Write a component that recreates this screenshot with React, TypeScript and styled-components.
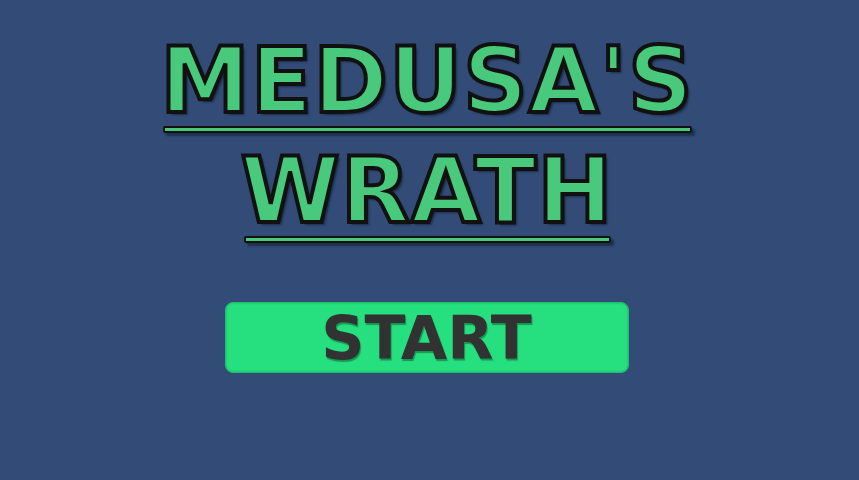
import React from "react";
import styled, { createGlobalStyle } from "styled-components";

const GlobalStyle = createGlobalStyle`
  html, body {
    margin: 0;
    padding: 0;
    background-color: #324c77;
  }
`;

const Screen = styled.div`
  width: 100vw;
  height: 100vh;
  overflow: hidden;
  background-color: #324c77;
  display: flex;
  flex-direction: column;
  align-items: center;
  padding: 36px 6px 0 0;
  box-sizing: border-box;
  font-family: "DejaVu Sans", Verdana, sans-serif;
`;

const Title = styled.h1`
  margin: 0;
  display: flex;
  flex-direction: column;
  align-items: center;
  gap: 13px;
  font-weight: 700;
`;

const TitleLine = styled.div`
  display: inline-flex;
  flex-direction: column;
  align-items: stretch;
`;

// the dark stroke sits on the glyph edge, thinning the green a little
const TitleText = styled.span`
  font-size: 90px;
  line-height: 90px;
  letter-spacing: 1px;
  margin-right: -1px;
  color: #48c97c;
  -webkit-text-stroke: 4px #111;
  text-shadow: 3px 3px 2px rgba(10, 20, 40, 0.55);
  white-space: nowrap;
`;

const Underline = styled.div`
  height: 3px;
  margin: 0 1px 0 3px;
  background-color: #48c97c;
  border: 2px solid #111;
  border-radius: 2px;
  box-shadow: 3px 3px 2px rgba(10, 20, 40, 0.5);
`;

const StartButton = styled.button`
  margin-top: 59px;
  width: 404px;
  height: 71px;
  padding: 0;
  background-color: #26e07f;
  border: 1px solid #1fbf6c;
  border-radius: 8px;
  box-shadow: inset 0 0 2px rgba(0, 80, 40, 0.4);
  display: flex;
  align-items: center;
  justify-content: center;
  cursor: pointer;
  font-family: "DejaVu Sans", Verdana, sans-serif;
  font-weight: 700;
  font-size: 60px;
  line-height: 1;
  color: #323232;
  text-shadow: 1px 2px 1px rgba(0, 60, 30, 0.45);
`;

function App() {
  return (
    <>
      <GlobalStyle />
      <Screen>
        <Title>
          <TitleLine>
            <TitleText>MEDUSA'S</TitleText>
            <Underline />
          </TitleLine>
          <TitleLine>
            <TitleText>WRATH</TitleText>
            <Underline />
          </TitleLine>
        </Title>
        <StartButton>START</StartButton>
      </Screen>
    </>
  );
}

export default App;
